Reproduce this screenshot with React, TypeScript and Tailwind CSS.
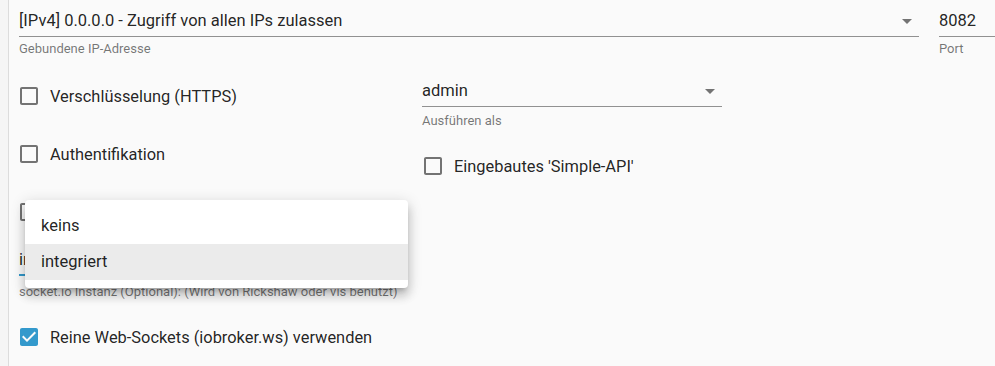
import React from 'react';

const ArrowDropDown = () => (
    <svg className="w-6 h-6 shrink-0" viewBox="0 0 24 24" fill="rgba(0,0,0,0.54)">
        <path d="M7 10l5 5 5-5z" />
    </svg>
);

const CheckBox: React.FC<{ checked?: boolean; label?: string }> = ({ checked, label }) => (
    <div className="flex items-center h-6">
        {checked ? (
            <svg className="w-6 h-6 shrink-0 -ml-[2px]" viewBox="0 0 24 24" fill="#3399cc">
                <path d="M19 3H5c-1.11 0-2 .9-2 2v14c0 1.1.89 2 2 2h14c1.1 0 2-.9 2-2V5c0-1.1-.9-2-2-2zm-9 14l-5-5 1.41-1.41L10 14.17l7.59-7.59L19 8l-9 9z" />
            </svg>
        ) : (
            <svg className="w-6 h-6 shrink-0 -ml-[2px]" viewBox="0 0 24 24" fill="rgba(0,0,0,0.54)">
                <path d="M19 5v14H5V5h14m0-2H5c-1.11 0-2 .9-2 2v14c0 1.1.89 2 2 2h14c1.1 0 2-.9 2-2V5c0-1.1-.9-2-2-2z" />
            </svg>
        )}
        {label && (
            <span className="ml-[9px] text-[16.4px] leading-[19px] text-[rgba(0,0,0,0.87)] whitespace-nowrap">{label}</span>
        )}
    </div>
);

const SelectField: React.FC<{ value: string; focused?: boolean; arrow?: boolean }> = ({ value, focused, arrow = true }) => (
    <div
        className={`h-8 flex items-center justify-between ${focused ? 'border-b-2 border-[#3399cc]' : 'border-b border-[rgba(0,0,0,0.42)]'}`}
    >
        <span className="text-[16.5px] leading-[19px] text-[rgba(0,0,0,0.87)] whitespace-nowrap">{value}</span>
        {arrow && <ArrowDropDown />}
    </div>
);

const Helper: React.FC<{ text: string; className?: string }> = ({ text, className }) => (
    <div className={`text-[13px] leading-[14px] text-[rgba(0,0,0,0.54)] whitespace-nowrap ${className ?? ''}`}>{text}</div>
);

export default function App() {
    return (
        <div className="flex w-[995px] h-[366px] overflow-hidden bg-[#fafafa] font-['Roboto',sans-serif]">
            {/* left edge */}
            <div className="w-[9px] shrink-0 bg-[#f5f5f5] border-r border-[#dcdcdc]" />

            <div className="relative flex-1 pl-[10px] flex flex-col">
                {/* IP + Port */}
                <div className="flex gap-5 pt-[5px]">
                    <div className="w-[900px] shrink-0">
                        <SelectField value="[IPv4] 0.0.0.0 - Zugriff von allen IPs zulassen" />
                        <Helper text="Gebundene IP-Adresse" className="mt-[5px]" />
                    </div>
                    <div className="w-[80px] shrink-0">
                        <SelectField value="8082" arrow={false} />
                        <Helper text="Port" className="mt-[5px]" />
                    </div>
                </div>

                {/* HTTPS + run as */}
                <div className="flex mt-[19px]">
                    <div className="w-[403px] shrink-0 pt-[9px]">
                        <CheckBox label="Verschlüsselung (HTTPS)" />
                    </div>
                    <div className="w-[300px] shrink-0">
                        <SelectField value="admin" />
                        <Helper text="Ausführen als" className="mt-[7px]" />
                    </div>
                </div>

                {/* Auth + Simple-API */}
                <div className="flex">
                    <div className="w-[404px] shrink-0 pt-[14px]">
                        <CheckBox label="Authentifikation" />
                    </div>
                    <div className="pt-[26px]">
                        <CheckBox label="Eingebautes 'Simple-API'" />
                    </div>
                </div>

                {/* Socket.io (label hidden behind the open menu) */}
                <div className="mt-[22px]">
                    <CheckBox />
                </div>

                <div className="mt-5 w-[300px]">
                    <SelectField value="integriert" focused />
                    <Helper text="socket.io Instanz (Optional): (Wird von Rickshaw oder vis benutzt)" className="mt-[9px]" />
                </div>

                {/* Pure web sockets */}
                <div className="mt-[26px]">
                    <CheckBox checked label="Reine Web-Sockets (iobroker.ws) verwenden" />
                </div>

                {/* open dropdown menu */}
                <div className="absolute left-[16px] top-[200px] w-[383px] py-2 bg-white rounded-[4px] shadow-[0_5px_5px_-3px_rgba(0,0,0,0.2),0_8px_10px_1px_rgba(0,0,0,0.14),0_3px_14px_2px_rgba(0,0,0,0.12)]">
                    <div className="h-9 flex items-center px-4 text-[16.5px] text-[rgba(0,0,0,0.87)]">keins</div>
                    <div className="h-9 flex items-center px-4 text-[16.5px] text-[rgba(0,0,0,0.87)] bg-[#ebebeb]">integriert</div>
                </div>
            </div>
        </div>
    );
}
